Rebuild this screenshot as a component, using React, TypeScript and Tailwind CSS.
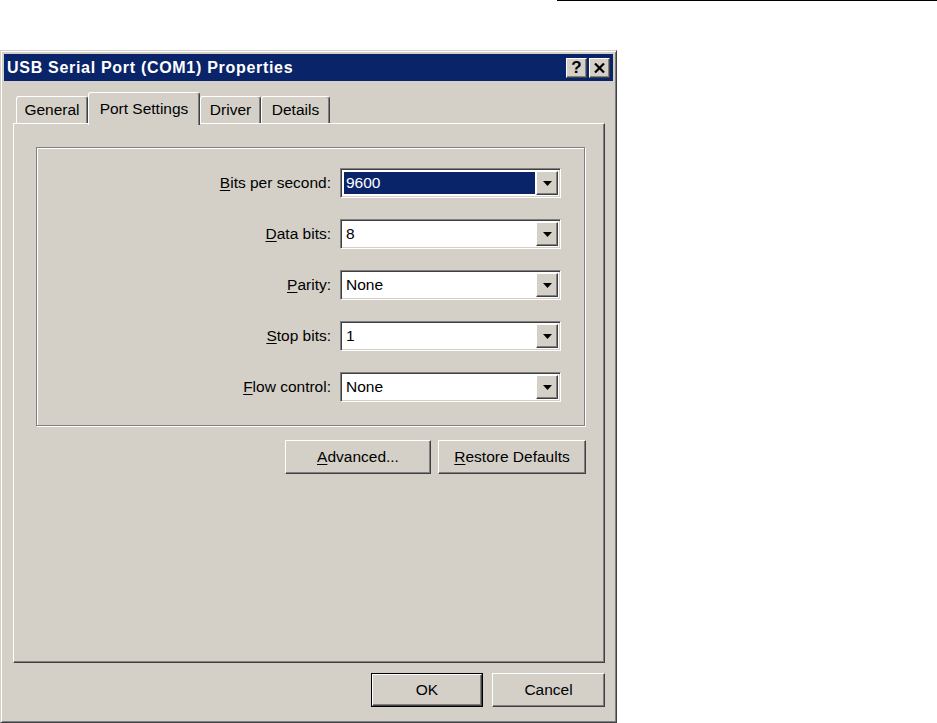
import type { ReactNode } from 'react';

const raised =
  'border border-t-white border-l-white border-r-[#404040] border-b-[#404040] shadow-[inset_-1px_-1px_#808080]';

function TitleButton({ children }: { children: ReactNode }) {
  return (
    <div className={`w-[21px] h-[20px] bg-[#d4d0c8] flex items-center justify-center ${raised}`}>
      {children}
    </div>
  );
}

function Arrow() {
  return (
    <svg width="9" height="5" viewBox="0 0 9 5">
      <polygon points="0,0 9,0 4.5,5" fill="#000" />
    </svg>
  );
}

function Combo({ value, selected }: { value: string; selected?: boolean }) {
  return (
    <div className="w-[221px] h-[30px] bg-white border border-t-[#808080] border-l-[#808080] border-r-white border-b-white shadow-[inset_1px_1px_#404040,inset_-1px_-1px_#d4d0c8] p-[2px] flex">
      <div className="flex-1 p-px flex">
        <div
          className={`flex-1 flex items-center pl-[2px] ${selected ? 'bg-[#0a246a] text-white' : 'text-black'}`}
        >
          {value}
        </div>
      </div>
      <div className={`w-[22px] h-full bg-[#d4d0c8] flex items-center justify-center ${raised}`}>
        <Arrow />
      </div>
    </div>
  );
}

function Row({ label, value, selected }: { label: ReactNode; value: string; selected?: boolean }) {
  return (
    <div className="flex justify-end items-center gap-[9px] pr-[23px]">
      <span>{label}</span>
      <Combo value={value} selected={selected} />
    </div>
  );
}

function Button({ children, w, isDefault }: { children: ReactNode; w: string; isDefault?: boolean }) {
  const inner = (
    <div className={`h-full bg-[#d4d0c8] flex items-center justify-center ${raised}`}>{children}</div>
  );
  return isDefault ? (
    <div className={`${w} h-[34px] border border-black`}>{inner}</div>
  ) : (
    <div className={`${w} h-[34px]`}>{inner}</div>
  );
}

const tabBase =
  'h-[27px] bg-[#d4d0c8] border-t border-l border-r border-t-white border-l-white border-r-[#404040] rounded-t-[3px] shadow-[inset_-1px_0_#808080] flex items-center justify-center';

export default function App() {
  return (
    <div
      className="w-[937px] h-[723px] bg-white overflow-hidden text-[15.5px] text-black"
      style={{ fontFamily: '"Liberation Sans", Arial, sans-serif' }}
    >
      <div className="ml-[557px] h-px bg-black" />

      {/* Window */}
      <div className="mt-[49px] w-[617px] h-[673px] bg-[#d4d0c8] border border-t-[#d4d0c8] border-l-[#d4d0c8] border-r-[#404040] border-b-[#404040] shadow-[inset_1px_1px_#ffffff,inset_-1px_-1px_#808080] p-[3px] flex flex-col">
        {/* Title bar */}
        <div className="h-[27px] bg-[#0a246a] flex items-center justify-between pl-[3px] pr-[3px]">
          <span className="text-white font-bold text-[16px] tracking-[0.7px]">
            USB Serial Port (COM1) Properties
          </span>
          <div className="flex gap-[2px]">
            <TitleButton>
              <span className="font-bold text-[17px] leading-none">?</span>
            </TitleButton>
            <TitleButton>
              <svg width="11" height="10" viewBox="0 0 11 10">
                <path d="M1 0.5 L10 9.5 M10 0.5 L1 9.5" stroke="#000" strokeWidth="2.2" />
              </svg>
            </TitleButton>
          </div>
        </div>

        {/* Tabs */}
        <div className="mt-[11px] h-[31px] flex items-end pl-[12px] relative z-10">
          <div className={`${tabBase} w-[72px]`}>General</div>
          <div
            className={`${tabBase} w-[112px] h-[33px] -mb-[2px] items-start pt-[4px] border-b-0`}
          >
            Port Settings
          </div>
          <div className={`${tabBase} w-[61px]`}>Driver</div>
          <div className={`${tabBase} w-[69px]`}>Details</div>
        </div>

        {/* Tab panel */}
        <div className="ml-[9px] w-[592px] h-[540px] border border-t-white border-l-white border-r-[#404040] border-b-[#404040] shadow-[inset_-1px_-1px_#808080] pl-[22px] pt-[23px]">
          <div className="w-[549px] h-[279px] border border-[#808080] shadow-[inset_1px_1px_#ffffff,1px_1px_#ffffff] pt-[20px] flex flex-col gap-[21px]">
            <Row
              label={
                <>
                  <u className="underline-offset-2">B</u>its per second:
                </>
              }
              value="9600"
              selected
            />
            <Row
              label={
                <>
                  <u className="underline-offset-2">D</u>ata bits:
                </>
              }
              value="8"
            />
            <Row
              label={
                <>
                  <u className="underline-offset-2">P</u>arity:
                </>
              }
              value="None"
            />
            <Row
              label={
                <>
                  <u className="underline-offset-2">S</u>top bits:
                </>
              }
              value="1"
            />
            <Row
              label={
                <>
                  <u className="underline-offset-2">F</u>low control:
                </>
              }
              value="None"
            />
          </div>

          <div className="w-[550px] mt-[14px] flex justify-end gap-[7px]">
            <Button w="w-[146px]">
              <span>
                <u className="underline-offset-2">A</u>dvanced...
              </span>
            </Button>
            <Button w="w-[148px]">
              <span>
                <u className="underline-offset-2">R</u>estore Defaults
              </span>
            </Button>
          </div>
        </div>

        {/* Dialog buttons */}
        <div className="mt-[10px] flex justify-end gap-[9px] pr-[8px]">
          <Button w="w-[112px]" isDefault>
            OK
          </Button>
          <Button w="w-[113px]">Cancel</Button>
        </div>
      </div>
    </div>
  );
}
